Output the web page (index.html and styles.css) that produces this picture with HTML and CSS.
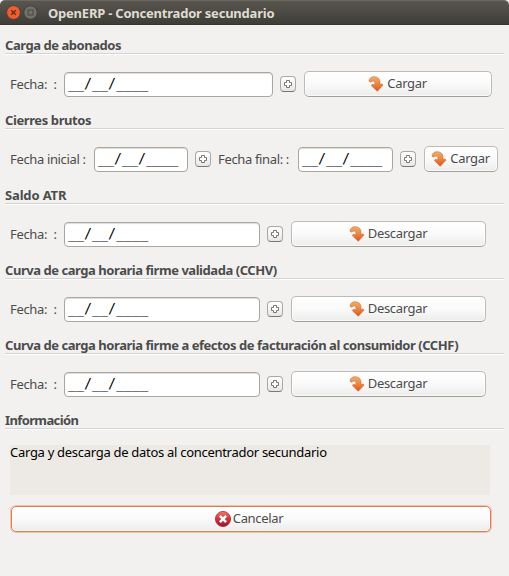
FILE: index.html
```
<!DOCTYPE html>
<html lang="es">
<head>
<meta charset="utf-8">
<title>OpenERP - Concentrador secundario</title>
<link rel="stylesheet" href="styles.css">
</head>
<body>
<svg class="defs" width="0" height="0" aria-hidden="true">
  <defs>
    <linearGradient id="orange" x1="0" y1="0" x2="0" y2="1"><stop offset="0" stop-color="#efae6b"/><stop offset=".5" stop-color="#e88743"/><stop offset="1" stop-color="#e2501d"/></linearGradient>
    <linearGradient id="red" x1="0" y1="0" x2="0" y2="1"><stop offset="0" stop-color="#e98072"/><stop offset=".45" stop-color="#d33a3a"/><stop offset="1" stop-color="#95133a"/></linearGradient>
    <symbol id="arrow" viewBox="0 0 16 16"><path d="M1 5.200C1.200 2.200 3.300.8 6 .7c4 .1 6 2.300 6 5.700v2.200l1.900-.7 1.200 1.100-5.800 6.300-6-5.700 1.100-1.400 2.500.7V7.200C6.900 5.700 6.300 5 5.200 5 4 5 3.400 5.700 2.900 6.200z" fill="url(#orange)" stroke="#d9672e" stroke-width=".6" stroke-linejoin="round"/></symbol>
    <symbol id="plus" viewBox="0 0 16 16"><path d="M6.500 4.500h3v2h2v3h-2v2h-3v-2h-2v-3h2z" fill="#fff" stroke="#777" stroke-width="1"/></symbol>
    <symbol id="cancel" viewBox="0 0 16 16"><circle cx="8" cy="8" r="7.600" fill="url(#red)" stroke="#a82b36" stroke-width=".8"/><path d="M4.900 4.900l6.200 6.200M11.100 4.900l-6.200 6.200" stroke="#fff" stroke-width="2.500"/></symbol>
  </defs>
</svg>
<header class="titlebar">
  <svg class="window-buttons" width="36" height="24" viewBox="0 0 36 24">
    <circle cx="9.500" cy="12.500" r="6.900" fill="#ed5f30" stroke="#47372f" stroke-width=".8"/>
    <path d="M7.200 10.200l4.600 4.600M11.800 10.200l-4.600 4.600" stroke="#5b2e1c" stroke-width="1.300"/>
    <circle cx="26.500" cy="12.500" r="6.700" fill="#74716a" stroke="#3c3a35" stroke-width=".8"/>
    <rect x="24" y="10" width="5" height="5" fill="none" stroke="#4a4843"/>
  </svg>
  <h1><span class="t-window">OpenERP - Concentrador secundario</span></h1>
</header>
<main>
  <section>
    <h2><span class="t-abonados">Carga de abonados</span></h2>
    <div class="row">
      <label class="single"><span class="t-fecha">Fecha:</span><span>:</span></label>
      <div class="field wide">__/__/____</div>
      <button class="add"><svg><use href="#plus"/></svg></button>
      <button class="btn load"><svg><use href="#arrow"/></svg><span class="t-cargar">Cargar</span></button>
    </div>
  </section>
  <section>
    <h2><span class="t-cierres">Cierres brutos</span></h2>
    <div class="row">
      <label class="first"><span class="t-inicial">Fecha inicial :</span></label>
      <div class="field short">__/__/____</div>
      <button class="add"><svg><use href="#plus"/></svg></button>
      <label class="second"><span class="t-final">Fecha final: :</span></label>
      <div class="field short last">__/__/____</div>
      <button class="add"><svg><use href="#plus"/></svg></button>
      <button class="btn small"><svg><use href="#arrow"/></svg><span class="t-cargar">Cargar</span></button>
    </div>
  </section>
  <section>
    <h2><span class="t-saldo">Saldo ATR</span></h2>
    <div class="row">
      <label class="single"><span class="t-fecha">Fecha:</span><span>:</span></label>
      <div class="field">__/__/____</div>
      <button class="add"><svg><use href="#plus"/></svg></button>
      <button class="btn download"><svg><use href="#arrow"/></svg><span class="t-descargar">Descargar</span></button>
    </div>
  </section>
  <section>
    <h2><span class="t-cchv">Curva de carga horaria firme validada (CCHV)</span></h2>
    <div class="row">
      <label class="single"><span class="t-fecha">Fecha:</span><span>:</span></label>
      <div class="field">__/__/____</div>
      <button class="add"><svg><use href="#plus"/></svg></button>
      <button class="btn download"><svg><use href="#arrow"/></svg><span class="t-descargar">Descargar</span></button>
    </div>
  </section>
  <section>
    <h2><span class="t-cchf">Curva de carga horaria firme a efectos de facturación al consumidor (CCHF)</span></h2>
    <div class="row">
      <label class="single"><span class="t-fecha">Fecha:</span><span>:</span></label>
      <div class="field">__/__/____</div>
      <button class="add"><svg><use href="#plus"/></svg></button>
      <button class="btn download"><svg><use href="#arrow"/></svg><span class="t-descargar">Descargar</span></button>
    </div>
  </section>
  <section class="info">
    <h2><span class="t-info">Información</span></h2>
    <p><span class="t-message">Carga y descarga de datos al concentrador secundario</span></p>
    <button class="btn cancel"><svg><use href="#cancel"/></svg><span class="t-cancelar">Cancelar</span></button>
  </section>
</main>
</body>
</html>
```
FILE: styles.css
```
* { box-sizing: border-box; }
body {
  margin: 0;
  height: 576px;
  overflow: hidden;
  background: #f2f1f0;
  color: #4c4c4c;
  font: 13px/16px "Noto Sans", "Open Sans", sans-serif;
}
.defs { position: absolute; }
span { white-space: pre; }
.titlebar {
  display: flex;
  align-items: center;
  height: 25px;
  padding-left: 4px;
  background: linear-gradient(#59564f, #3e3d38);
  border-top: 1px solid #6a6861;
  border-bottom: 1px solid #35342f;
  border-radius: 5px 5px 0 0;
}
.window-buttons { flex: none; margin-top: -2px; }
h1 {
  margin: 1px 0 0 8px;
  font-size: 13px;
  line-height: 18px;
  color: #dfdbd2;
}
main { padding: 12px 5px 0; }
section { height: 75px; }
h2 {
  margin: 0 0 16px;
  height: 18px;
  font-size: 13px;
  line-height: 17px;
  border-bottom: 1px solid #fff;
  box-shadow: inset 0 -1px #d5d4d2;
}
.row { display: flex; align-items: center; height: 26px; padding-left: 5px; }
label { flex: none; margin-top: -1px; }
.single { display: flex; justify-content: space-between; width: 47px; margin-right: 7px; }
.first { width: 84px; }
.second { width: 73px; margin-left: 7px; }
.field {
  flex: none;
  width: 196px;
  height: 25px;
  padding-left: 3px;
  border: 1px solid #aaa7a2;
  border-radius: 4px;
  background: #fff;
  box-shadow: inset 0 1px 1px #dedcda;
  color: #000;
  font: 13.333px/22px "DejaVu Sans Mono", monospace;
}
.wide { width: 209px; }
.short { width: 94px; }
.second + .field { width: 95px; margin-left: 7px; }
button {
  flex: none;
  display: flex;
  align-items: center;
  justify-content: center;
  padding: 0;
  font: inherit;
  color: inherit;
}
.add {
  width: 16px;
  height: 16px;
  margin: 0 0 0 7px;
  border: 1px solid #aaa8a5;
  border-bottom-color: #777;
  border-radius: 4px;
  background: linear-gradient(#fff, #e8e7e5);
}
.add svg { flex: none; width: 16px; height: 16px; }
.btn {
  gap: 3px;
  height: 26px;
  margin-left: 8px;
  padding-right: 1px;
  border: 1px solid #bdbbb8;
  border-bottom-color: #a19f9b;
  border-radius: 5px;
  background: linear-gradient(#fff, #fafafa 50%, #ececeb);
  box-shadow: inset 0 0 0 1px #ffffffb0;
}
.btn svg { flex: none; width: 16px; height: 16px; }
.btn span { margin-top: -2px; }
.load { width: 188px; }
.small { width: 74px; }
.download { width: 195px; }
.info { height: 140px; }
.info h2 { margin-bottom: 15px; }
p {
  width: 480px;
  height: 50px;
  margin: 0 0 0 5px;
  background: #edeae5;
  color: #000;
  line-height: 15px;
}
.cancel {
  width: 480px;
  height: 26px;
  margin: 11px 0 0 6px;
  padding-right: 4px;
  border: 1px solid #e5794f;
  box-shadow: 0 0 0 1px #f3c4b2, inset 0 0 0 1px #ffffffb0;
}
.cancel span { margin-left: -1px; }
.t-window { letter-spacing: -.22px; }
.t-abonados { letter-spacing: -.46px; }
.t-cchv, .t-cchf { letter-spacing: -.45px; }
.t-cierres { letter-spacing: -.4px; }
.t-saldo { letter-spacing: -.15px; }
.t-info { letter-spacing: -.62px; }
.t-fecha, .t-inicial, .t-final { letter-spacing: -.35px; }
.t-cargar, .t-descargar, .t-cancelar { letter-spacing: -.33px; }
.t-message { letter-spacing: -.29px; }
```
